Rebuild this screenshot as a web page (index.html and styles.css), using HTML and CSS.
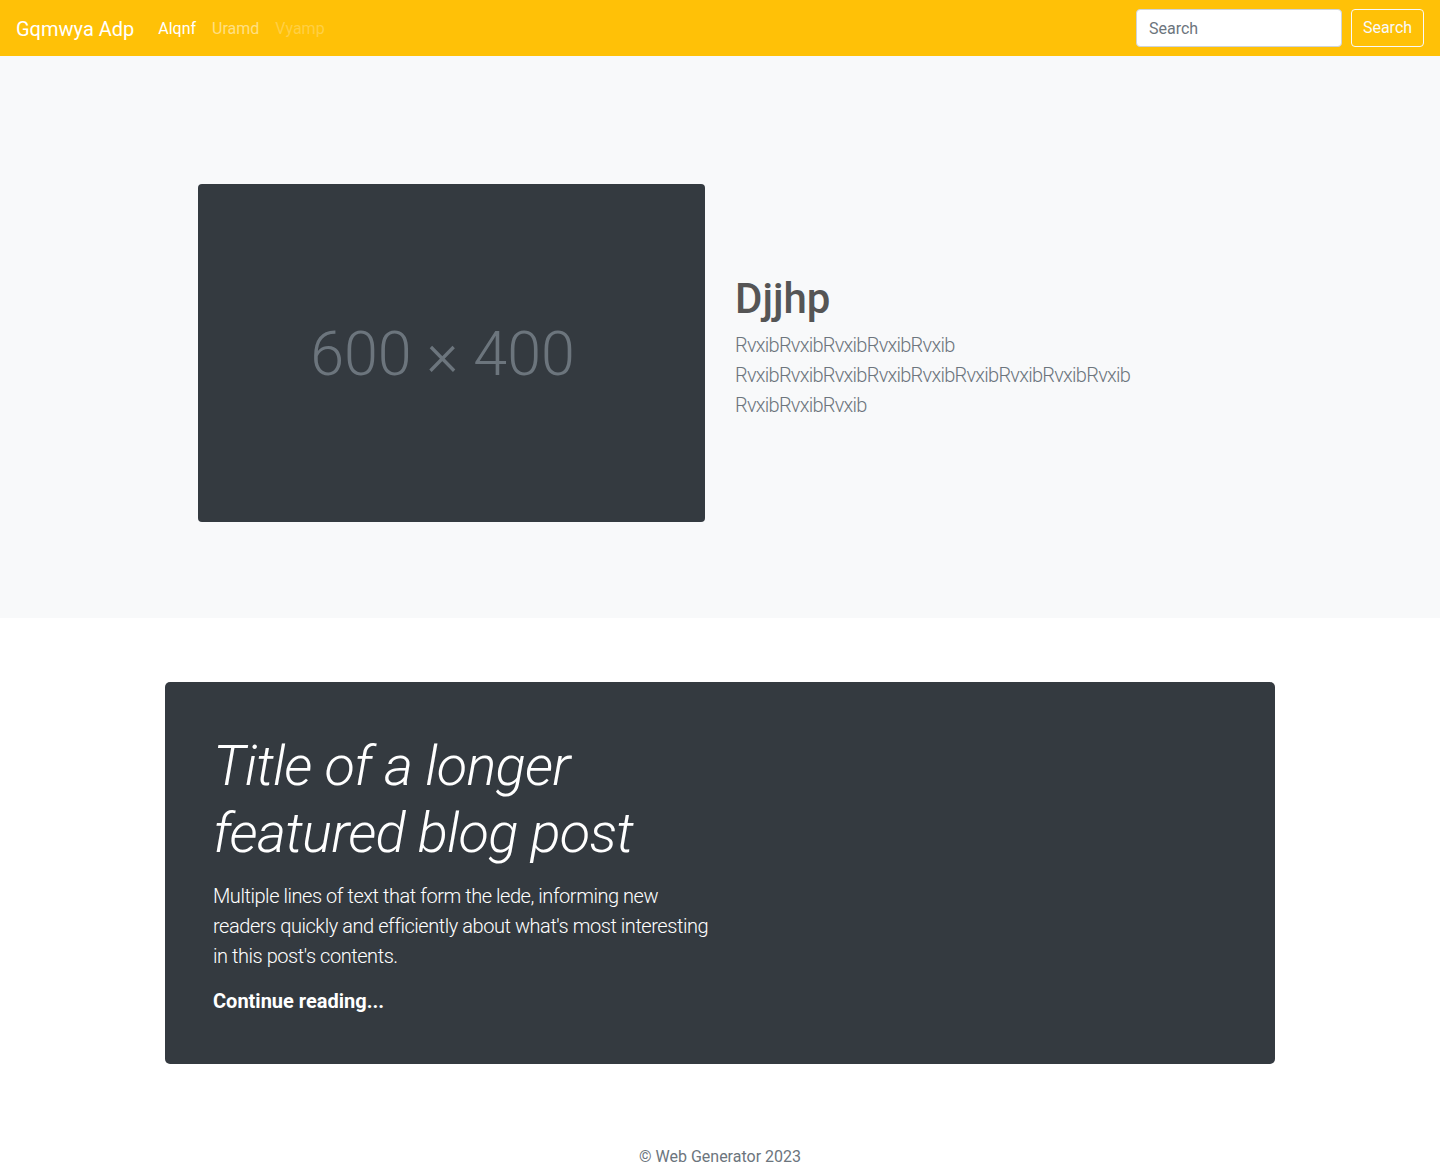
FILE: index.html
```html
<!DOCTYPE html>
<html lang="en">
<head>
<meta charset="utf-8">
<title>Gqmwya Adp</title>
<link rel="stylesheet" href="styles.css">
</head>
<body>
<nav class="navbar">
  <a class="brand" href="#">Gqmwya Adp</a>
  <ul class="nav">
    <li><a class="nav-link active" href="#">Alqnf</a></li>
    <li><a class="nav-link" href="#">Uramd</a></li>
    <li><a class="nav-link disabled" href="#">Vyamp</a></li>
  </ul>
  <form class="search-form">
    <input class="search-input" type="text" placeholder="Search">
    <button class="search-btn" type="button">Search</button>
  </form>
</nav>
<main>
  <section class="hero">
    <div class="hero-row">
      <div class="hero-col">
        <div class="placeholder"><span>600 × 400</span></div>
      </div>
      <div class="hero-col hero-text">
        <h1 class="hero-title">Djjhp</h1>
        <p class="lead muted hero-lead">RvxibRvxibRvxibRvxibRvxib RvxibRvxibRvxibRvxibRvxibRvxibRvxibRvxibRvxib RvxibRvxibRvxib</p>
      </div>
    </div>
  </section>
  <div class="container">
    <div class="feature">
      <div class="feature-col">
        <h1 class="feature-title">Title of a longer featured blog post</h1>
        <p class="lead feature-lede">Multiple lines of text that form the lede, informing new readers quickly and efficiently about what's most interesting in this post's contents.</p>
        <p class="lead feature-more"><a href="#">Continue reading...</a></p>
      </div>
    </div>
  </div>
</main>
<footer class="footer">© Web Generator 2023</footer>
</body>
</html>
```
FILE: styles.css
```css
* { box-sizing: border-box; }
html, body { margin: 0; padding: 0; }
body {
  font-family: "Segoe UI", Roboto, "Noto Sans", "Liberation Sans", sans-serif;
  font-size: 16px;
  line-height: 1.5;
  color: #212529;
  background: #fff;
}
a { text-decoration: none; }

.navbar {
  display: flex;
  align-items: center;
  background: #ffc107;
  padding: 9px 16px 7px;
  height: 56px;
}
.brand {
  color: #fff;
  font-size: 20px;
  line-height: 30px;
  padding: 5px 0;
  margin-right: 16px;
}
.nav {
  display: flex;
  list-style: none;
  margin: 0;
  padding: 0;
  flex: 1;
}
.nav-link {
  display: block;
  padding: 8px;
  color: rgba(255,255,255,.5);
}
.nav-link.active { color: #fff; }
.nav-link.disabled { color: rgba(255,255,255,.25); }
.search-form { display: flex; align-items: center; margin: -2px 0 0; }
.search-input {
  width: 206px;
  height: 38px;
  padding: 6px 12px;
  font: inherit;
  color: #495057;
  border: 1px solid #ced4da;
  border-radius: 4px;
  background: #fff;
  margin-right: 9px;
}
.search-input::placeholder { color: #6c757d; }
.search-btn {
  width: 73px;
  height: 38px;
  padding: 6px 10px;
  font: inherit;
  color: #f8f9fa;
  background: transparent;
  border: 1px solid #f8f9fa;
  border-radius: 4px;
}

.hero {
  background: #f8f9fa;
  padding: 128px 0 96px;
}
.hero-row {
  width: 1074px;
  margin: 0 auto;
  display: flex;
  align-items: center;
}
.hero-col {
  width: 50%;
  padding: 0 15px;
}
.placeholder {
  height: 338px;
  background: #343a40;
  border-radius: 4px;
  display: flex;
  align-items: center;
  justify-content: center;
}
.placeholder span {
  color: #6c757d;
  font-size: 61px;
  font-weight: 300;
  line-height: 1;
  margin-right: 18px;
  margin-top: 2px;
}
.hero-text { padding-top: 4px; }
.hero-title {
  margin: 0 0 6px;
  font-size: 42px;
  font-weight: 500;
  line-height: 1.2;
  color: #555;
}
.lead {
  font-size: 20px;
  font-weight: 300;
  line-height: 30px;
  margin: 0 0 16px;
}
.hero-lead { letter-spacing: -0.75px; }
.muted { color: #6c757d; }

.container {
  width: 1110px;
  margin: 64px auto 64px;
}
.feature {
  background: #343a40;
  color: #fff;
  border-radius: 5px;
  padding: 48px;
}
.feature-col { width: 507px; }
.feature-title {
  margin: 0 0 14px;
  padding-top: 3px;
  font-size: 56px;
  font-weight: 300;
  font-style: italic;
  line-height: 1.2;
  letter-spacing: -0.75px;
}
.feature-lede { margin-bottom: 15px; letter-spacing: -0.45px; }
.feature-more { margin: 0; }
.feature-more a { color: #fff; font-weight: 700; }

.footer {
  text-align: center;
  color: #6c757d;
  padding: 17px 0 15px;
  line-height: 24px;
}
```
